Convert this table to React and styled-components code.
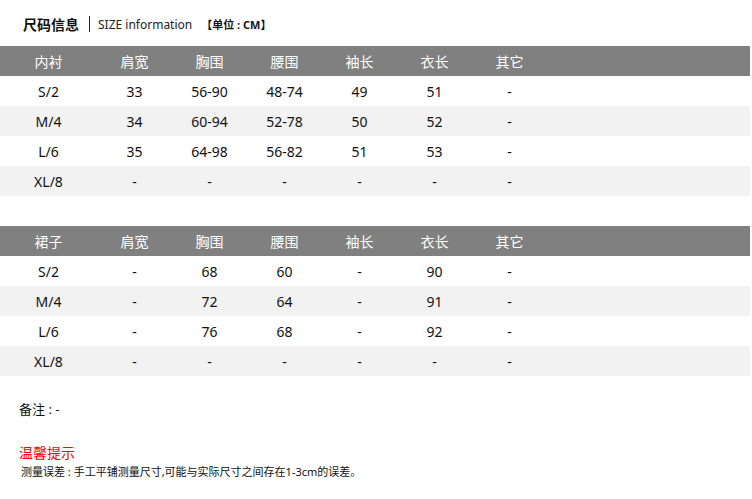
import React from 'react'
import styled, { createGlobalStyle } from 'styled-components'

const GlobalStyle = createGlobalStyle`
  body {
    margin: 0;
    background: #fff;
    font-family: "Noto Sans", "Noto Sans CJK SC", sans-serif;
    color: #111;
  }
`

const Page = styled.div`
  width: 750px;
  padding-top: 12px;
`

const TitleBar = styled.div`
  display: flex;
  align-items: center;
  height: 24px;
  padding-left: 23px;
  margin-bottom: 10px;
`

const TitleMain = styled.span`
  font-size: 14px;
  font-weight: 700;
  color: #111;
`

const Divider = styled.span`
  width: 1px;
  height: 16px;
  background: #222;
  margin: 0 8px 0 10px;
`

const TitleSub = styled.span`
  font-size: 12px;
  color: #222;
`

const Unit = styled.span`
  font-size: 11px;
  font-weight: 700;
  margin-left: 9px;
  color: #111;
`

const Table = styled.div`
  display: flex;
  flex-direction: column;
  margin-bottom: ${({ $gap }) => $gap || 0}px;
`

const Row = styled.div`
  display: grid;
  grid-template-columns: 97px repeat(6, 75px) 1fr;
  height: 30px;
  align-items: center;
  background: ${({ $head, $alt }) => ($head ? '#808080' : $alt ? '#f2f2f2' : '#fff')};
  color: ${({ $head }) => ($head ? '#fff' : '#111')};
  font-size: 14px;
`

const Cell = styled.span`
  text-align: center;
  white-space: nowrap;
`

const Note = styled.div`
  font-size: 13px;
  padding-left: 19px;
  margin-top: 23px;
  color: #111;
`

const Tip = styled.div`
  font-size: 14px;
  color: #ff0000;
  padding-left: 19px;
  margin-top: 24px;
`

const TipText = styled.div`
  font-size: 11px;
  padding-left: 21px;
  margin-top: 1px;
  color: #111;
`

const headers1 = ['内衬', '肩宽', '胸围', '腰围', '袖长', '衣长', '其它']
const rows1 = [
  ['S/2', '33', '56-90', '48-74', '49', '51', '-'],
  ['M/4', '34', '60-94', '52-78', '50', '52', '-'],
  ['L/6', '35', '64-98', '56-82', '51', '53', '-'],
  ['XL/8', '-', '-', '-', '-', '-', '-']
]

const headers2 = ['裙子', '肩宽', '胸围', '腰围', '袖长', '衣长', '其它']
const rows2 = [
  ['S/2', '-', '68', '60', '-', '90', '-'],
  ['M/4', '-', '72', '64', '-', '91', '-'],
  ['L/6', '-', '76', '68', '-', '92', '-'],
  ['XL/8', '-', '-', '-', '-', '-', '-']
]

const SizeTable = ({ headers, rows, gap }) => (
  <Table $gap={gap}>
    <Row $head>
      {headers.map(h => (
        <Cell key={h}>{h}</Cell>
      ))}
      <span />
    </Row>
    {rows.map((r, i) => (
      <Row key={r[0]} $alt={i % 2 === 1}>
        {r.map((c, j) => (
          <Cell key={j}>{c}</Cell>
        ))}
        <span />
      </Row>
    ))}
  </Table>
)

export default function App() {
  return (
    <Page>
      <GlobalStyle />
      <TitleBar>
        <TitleMain>尺码信息</TitleMain>
        <Divider />
        <TitleSub>SIZE information</TitleSub>
        <Unit>【单位 : CM】</Unit>
      </TitleBar>
      <SizeTable headers={headers1} rows={rows1} gap={30} />
      <SizeTable headers={headers2} rows={rows2} />
      <Note>备注 : -</Note>
      <Tip>温馨提示</Tip>
      <TipText>测量误差 : 手工平铺测量尺寸,可能与实际尺寸之间存在1-3cm的误差。</TipText>
    </Page>
  )
}
